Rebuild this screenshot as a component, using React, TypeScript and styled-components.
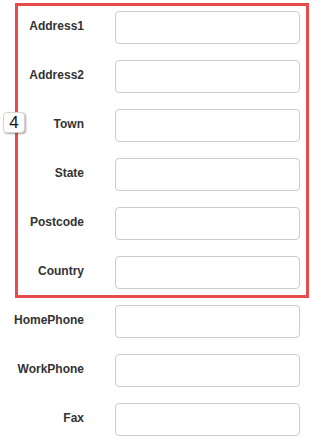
import React from "react";
import styled, { createGlobalStyle } from "styled-components";

const Global = createGlobalStyle`
  html, body { margin: 0; padding: 0; background: #fff; }
  body { font-family: "Liberation Sans", Arial, sans-serif; }
`;

const Page = styled.div`
  width: 326px;
  padding-top: 3px;
  display: flex;
  flex-direction: column;
`;

const Highlight = styled.div`
  position: relative;
  margin-left: 15px;
  width: 294px;
  box-sizing: border-box;
  border: 3px solid #e84c4a;
  padding: 5px 0 6px 0;
  display: flex;
  flex-direction: column;
  gap: 16px;
`;

const Plain = styled.div`
  display: flex;
  flex-direction: column;
  gap: 16px;
  padding-top: 7px;
`;

const Row = styled.div`
  display: flex;
  align-items: flex-start;
  gap: 31px;
`;

const Label = styled.label<{ $w: number }>`
  width: ${(p) => p.$w}px;
  flex: none;
  text-align: right;
  font-size: 12px;
  font-weight: bold;
  color: #333;
  line-height: 17px;
  padding-top: 7px;
  white-space: nowrap;
`;

const Input = styled.input`
  width: 185px;
  height: 33px;
  box-sizing: border-box;
  border: 1px solid #ccc;
  border-radius: 4px;
  background: #fff;
  margin: 0;
  padding: 0 8px;
  outline: none;
`;

const Badge = styled.div`
  position: absolute;
  left: -15px;
  top: 106px;
  width: 22px;
  height: 21px;
  box-sizing: border-box;
  border: 1px solid #d4d4d4;
  border-radius: 4px;
  background: #fff;
  box-shadow: 1px 1px 2px rgba(0, 0, 0, 0.35);
  display: flex;
  align-items: center;
  justify-content: center;
  font-size: 17px;
  color: #111;
  line-height: 1;
`;

const inside = ["Address1", "Address2", "Town", "State", "Postcode", "Country"];
const outside = ["HomePhone", "WorkPhone", "Fax"];

export default function App() {
  return (
    <>
      <Global />
      <Page>
        <Highlight>
          <Badge>4</Badge>
          {inside.map((l) => (
            <Row key={l}>
              <Label $w={66}>{l}</Label>
              <Input />
            </Row>
          ))}
        </Highlight>
        <Plain>
          {outside.map((l) => (
            <Row key={l}>
              <Label $w={84}>{l}</Label>
              <Input />
            </Row>
          ))}
        </Plain>
      </Page>
    </>
  );
}
